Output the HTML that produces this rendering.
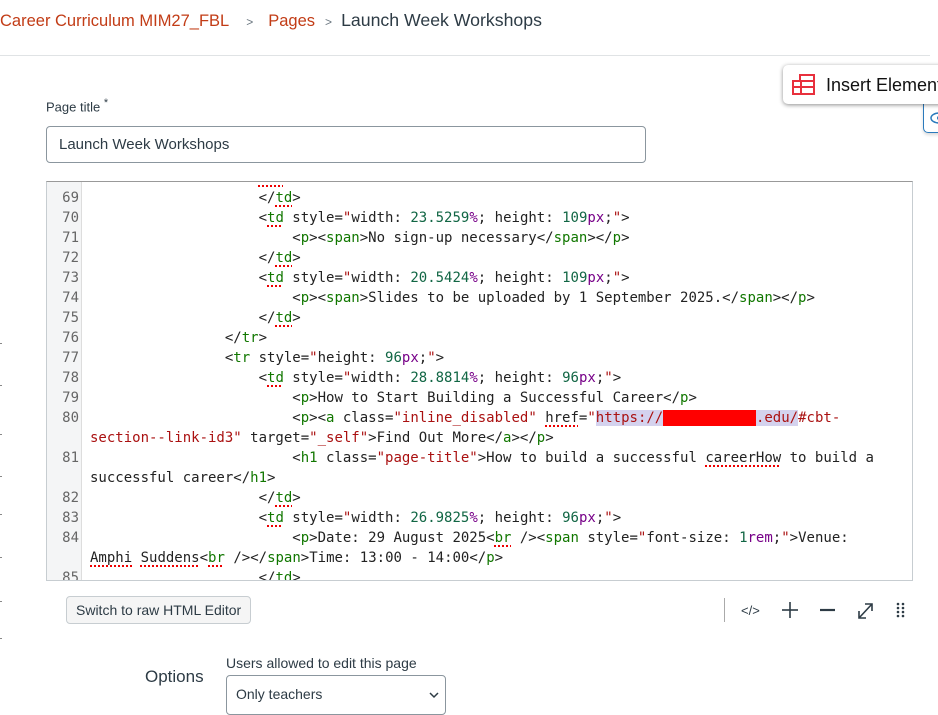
<!DOCTYPE html>
<html><head><meta charset="utf-8"><style>
*{margin:0;padding:0;box-sizing:border-box}
body{width:938px;height:711px;overflow:hidden;background:#fff;font-family:"Liberation Sans",sans-serif;position:relative;color:#2d3b45}
.bc{position:absolute;top:10px;left:0;font-size:16.5px;white-space:nowrap}
.bc a{color:#c23c16;text-decoration:none}
.bc .sep{color:#6b7780;font-size:12px;margin:0 15px 0 17px}
.bc .sep2{color:#6b7780;font-size:12px;margin:0 9px 0 10px}
.bc .cur{color:#2d3b45;font-size:17.7px}
.hr{position:absolute;top:55px;left:0;width:930px;height:1px;background:#e0e3e5}
.lbl{position:absolute;top:97px;left:46px;font-size:13px;color:#2d3b45}
.inp{position:absolute;top:126px;left:46px;width:600px;height:37px;border:1px solid #8b969e;border-radius:4px;font-size:15px;padding:9px 12px;color:#2d3b45}
.ins{position:absolute;top:65px;left:783px;width:170px;height:39px;background:#fff;border-radius:5px;box-shadow:0 1px 4px rgba(0,0,0,.45);font-size:18px;color:#111;padding:10px 0 0 43px;white-space:nowrap}
.eye{position:absolute;top:104px;left:923px;width:30px;height:29px;border:1px solid #2b7abc;border-radius:0 0 0 5px;border-top:none;box-shadow:0 2px 3px rgba(0,0,0,.15)}
.code{position:absolute;top:181px;left:46px;width:867px;height:400px;border:1px solid #c7cdd1;border-top:1px solid #999;overflow:hidden;background:#fff}
.gut{position:absolute;top:0;left:0;width:35px;height:100%;background:#f4f5f6;border-right:1px solid #ddd}
.ln{position:absolute;left:0;width:32px;text-align:right;font-family:"DejaVu Sans Mono",monospace;font-size:14px;color:#666;line-height:20px}
.tx{position:absolute;left:43px;font-family:"DejaVu Sans Mono",monospace;font-size:14px;color:#222;line-height:20px;white-space:pre}
.t{color:#117700}.s{color:#aa1111}.n{color:#116644}.u{color:#770088}
.sq{text-decoration:underline dotted #e00;text-decoration-thickness:2px;text-underline-offset:3px}
.sel{background:#d4d2ee}
.btn{position:absolute;top:596px;left:66px;width:185px;height:28px;border:1px solid #c7cdd1;border-radius:4px;background:#f5f5f5;font-size:14px;color:#2d3b45;padding:5px 0 0 9px}
.vbar{position:absolute;top:598px;left:724px;width:1px;height:24px;background:#aaa}
.opt{position:absolute;top:667px;left:145px;font-size:17px;color:#2d3b45}
.ual{position:absolute;top:655px;left:226px;font-size:14px;color:#2d3b45}
.sel2{position:absolute;top:675px;left:226px;width:220px;height:40px;border:1px solid #8b969e;border-radius:4px;font-size:14px;padding:10px 9px;color:#2d3b45}
.tick{position:absolute;left:0;width:2px;height:1px;background:#888}
</style></head><body>
<div class="bc"><a>Career Curriculum MIM27_FBL</a><span class="sep">&gt;</span><a>Pages</a><span class="sep2">&gt;</span><span class="cur">Launch Week Workshops</span></div>
<div class="hr"></div>
<div class="lbl">Page title <sup>*</sup></div>
<div class="inp">Launch Week Workshops</div>
<div class="eye"><svg width="20" height="14" style="position:absolute;left:5px;top:7px"><ellipse cx="10" cy="7" rx="8" ry="5" fill="none" stroke="#2b7abc" stroke-width="1.5"/><circle cx="10" cy="7" r="2" fill="#2b7abc"/></svg></div>
<div class="ins"><svg width="24" height="22" style="position:absolute;left:9px;top:9px" fill="none" stroke="#e8303d" stroke-width="2"><rect x="8" y="1" width="14" height="6"/><rect x="1" y="7" width="21" height="6"/><rect x="1" y="13" width="21" height="7"/><line x1="9" y1="7" x2="9" y2="20"/></svg>Insert Element</div>
<div class="code">
<div class="gut"></div>
<div class="ln" style="top:6px">69<br>70<br>71<br>72<br>73<br>74<br>75<br>76<br>77<br>78<br>79<br>80<br><br>81<br><br>82<br>83<br>84<br><br>85</div>
<div class="tx" style="top:-14px">                    <span class="t sq">   </span>
                    &lt;/<span class="t sq">td</span>&gt;
                    &lt;<span class="t sq">td</span> style=<span class="s">"</span>width: <span class="n">23.5259</span><span class="u">%</span>; height: <span class="n">109</span><span class="u">px</span>;<span class="s">"</span>&gt;
                        &lt;<span class="t">p</span>&gt;&lt;<span class="t">span</span>&gt;No sign-up necessary&lt;/<span class="t">span</span>&gt;&lt;/<span class="t">p</span>&gt;
                    &lt;/<span class="t sq">td</span>&gt;
                    &lt;<span class="t sq">td</span> style=<span class="s">"</span>width: <span class="n">20.5424</span><span class="u">%</span>; height: <span class="n">109</span><span class="u">px</span>;<span class="s">"</span>&gt;
                        &lt;<span class="t">p</span>&gt;&lt;<span class="t">span</span>&gt;Slides to be uploaded by 1 September 2025.&lt;/<span class="t">span</span>&gt;&lt;/<span class="t">p</span>&gt;
                    &lt;/<span class="t sq">td</span>&gt;
                &lt;/<span class="t">tr</span>&gt;
                &lt;<span class="t">tr</span> style=<span class="s">"</span>height: <span class="n">96</span><span class="u">px</span>;<span class="s">"</span>&gt;
                    &lt;<span class="t sq">td</span> style=<span class="s">"</span>width: <span class="n">28.8814</span><span class="u">%</span>; height: <span class="n">96</span><span class="u">px</span>;<span class="s">"</span>&gt;
                        &lt;<span class="t">p</span>&gt;How to Start Building a Successful Career&lt;/<span class="t">p</span>&gt;
                        &lt;<span class="t">p</span>&gt;&lt;<span class="t">a</span> class=<span class="s">"inline_disabled"</span> <span class="sq">href</span>=<span class="s">"<span class="sel">https://<span style="background:#f00">           </span>.edu/</span>#cbt-</span>
<span class="s">section--link-id3"</span> target=<span class="s">"_self"</span>&gt;Find Out More&lt;/<span class="t">a</span>&gt;&lt;/<span class="t">p</span>&gt;
                        &lt;<span class="t">h1</span> class=<span class="s">"page-title"</span>&gt;How to build a successful <span class="sq">careerHow</span> to build a
successful career&lt;/<span class="t">h1</span>&gt;
                    &lt;/<span class="t sq">td</span>&gt;
                    &lt;<span class="t sq">td</span> style=<span class="s">"</span>width: <span class="n">26.9825</span><span class="u">%</span>; height: <span class="n">96</span><span class="u">px</span>;<span class="s">"</span>&gt;
                        &lt;<span class="t">p</span>&gt;Date: 29 August 2025&lt;<span class="t sq">br</span> /&gt;&lt;<span class="t">span</span> style=<span class="s">"</span>font-size: <span class="n">1</span><span class="u">rem</span>;<span class="s">"</span>&gt;Venue:
<span class="sq">Amphi</span> <span class="sq">Suddens</span>&lt;<span class="t sq">br</span> /&gt;&lt;/<span class="t">span</span>&gt;Time: 13:00 - 14:00&lt;/<span class="t">p</span>&gt;
                    &lt;/<span class="t">td</span>&gt;</div>
</div>
<div class="btn">Switch to raw HTML Editor</div>
<div class="vbar"></div>
<svg style="position:absolute;left:738px;top:598px" width="180" height="24" fill="none" stroke="#2d3b45" stroke-width="1.6">
<text x="3" y="17" font-family="Liberation Sans" font-size="13" fill="#2d3b45" stroke="none">&lt;/&gt;</text>
<line x1="52" y1="4" x2="52" y2="20"/><line x1="44" y1="12" x2="60" y2="12"/>
<line x1="82" y1="12" x2="97" y2="12" stroke-width="2.2"/>
<line x1="121" y1="20" x2="134" y2="6"/><polyline points="127,6 134,6 134,13"/><polyline points="121,13 121,20 128,20"/>
<g fill="#2d3b45" stroke="none"><circle cx="160" cy="6" r="1.3"/><circle cx="165" cy="6" r="1.3"/><circle cx="160" cy="10" r="1.3"/><circle cx="165" cy="10" r="1.3"/><circle cx="160" cy="14" r="1.3"/><circle cx="165" cy="14" r="1.3"/><circle cx="160" cy="18" r="1.3"/><circle cx="165" cy="18" r="1.3"/></g>
</svg>
<div class="tick" style="top:343px"></div><div class="tick" style="top:385px"></div><div class="tick" style="top:434px"></div><div class="tick" style="top:476px"></div><div class="tick" style="top:514px"></div><div class="tick" style="top:557px"></div><div class="tick" style="top:601px"></div><div class="tick" style="top:638px"></div>
<div class="opt">Options</div>
<div class="ual">Users allowed to edit this page</div>
<div class="sel2">Only teachers<svg style="position:absolute;right:6px;top:16px" width="10" height="7" fill="none" stroke="#2d3b45" stroke-width="1.5"><polyline points="1,1 5,5 9,1"/></svg></div>
</body></html>
